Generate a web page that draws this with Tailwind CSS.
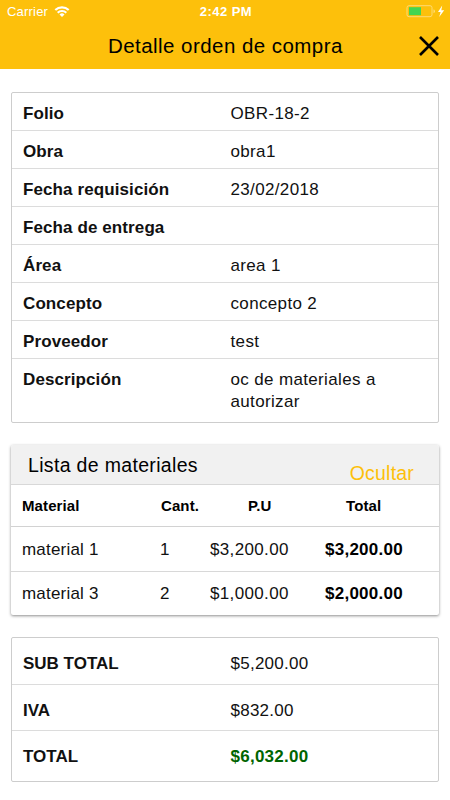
<!DOCTYPE html>
<html lang="es">
<head>
    <meta charset="UTF-8">
    <meta name="viewport" content="width=device-width, initial-scale=1.0">
    <title>Detalle orden de compra</title>
    <script src="https://cdn.jsdelivr.net/npm/@tailwindcss/browser@4"></script>
</head>
<body class="bg-white text-[#111] font-['Liberation_Sans',Arial,sans-serif] h-[800px] overflow-hidden whitespace-nowrap">

    <!-- Encabezado -->
    <header class="h-[69px] bg-[#fdc00b]">
        <!-- Barra de estado -->
        <div class="grid grid-cols-[1fr_auto_1fr] items-center h-[23px] pl-[7px] pr-[5px] text-white text-[13px]">
            <div class="flex items-center gap-[6px]">
                <span class="tracking-[0.2px]">Carrier</span>
                <svg class="w-[16px] h-[11px]" viewBox="0 0 15 11" fill="none" stroke="white" stroke-width="2.1">
                    <path d="M.8 4.1a9.5 9.5 0 0 1 13.4 0M3.2 6.7a6.1 6.1 0 0 1 8.6 0"/>
                    <path d="M7.5 11 5 8.5a3.5 3.5 0 0 1 5 0z" fill="white" stroke="none"/>
                </svg>
            </div>
            <span class="font-bold tracking-[0.45px]">2:42 PM</span>
            <div class="flex justify-end items-center">
                <svg class="w-[39px] h-[13px]" viewBox="0 0 39 13">
                    <rect x="1" y=".7" width="25" height="11" rx="2" fill="none" stroke="#fedb74"/>
                    <rect x="3" y="2.2" width="12" height="8" fill="#43d551"/>
                    <path d="M27.5 4.2q1.5.5 1.5 2t-1.5 2z" fill="#fedb74"/>
                    <path d="M36.2 .4 32 6.9h2.6L33.2 12l5-6.8h-2.9z" fill="white"/>
                </svg>
            </div>
        </div>
        <!-- Título -->
        <div class="grid grid-cols-[108px_1fr_auto] items-center h-[46px] pr-[11px] text-black">
            <span></span>
            <h1 class="text-[20.5px] tracking-[0.45px]">Detalle orden de compra</h1>
            <svg class="w-5 h-5" viewBox="0 0 20 20" stroke="black" stroke-width="2.6">
                <path d="M1 1l18 18M19 1 1 19"/>
            </svg>
        </div>
    </header>

    <main class="flex flex-col pt-[23px]">
        <!-- Datos de la orden -->
        <dl class="mx-[11px] h-[331px] border border-[#cdcdcd] rounded-[2px] divide-y divide-[#dcdcdc] text-[17px] leading-[22px] tracking-[0.35px]">
            <div class="flex h-[38px] pt-[10px] pl-[11px]"><dt class="w-[207.5px] font-bold text-[17px] tracking-[0.1px]">Folio</dt><dd>OBR-18-2</dd></div>
            <div class="flex h-[38px] pt-[10px] pl-[11px]"><dt class="w-[207.5px] font-bold text-[17px] tracking-[0.1px]">Obra</dt><dd>obra1</dd></div>
            <div class="flex h-[38px] pt-[10px] pl-[11px]"><dt class="w-[207.5px] font-bold text-[17px] tracking-[0.1px]">Fecha requisición</dt><dd>23/02/2018</dd></div>
            <div class="flex h-[38px] pt-[10px] pl-[11px]"><dt class="w-[207.5px] font-bold text-[17px] tracking-[0.1px]">Fecha de entrega</dt><dd></dd></div>
            <div class="flex h-[38px] pt-[10px] pl-[11px]"><dt class="w-[207.5px] font-bold text-[17px] tracking-[0.1px]">Área</dt><dd>area 1</dd></div>
            <div class="flex h-[38px] pt-[10px] pl-[11px]"><dt class="w-[207.5px] font-bold text-[17px] tracking-[0.1px]">Concepto</dt><dd>concepto 2</dd></div>
            <div class="flex h-[38px] pt-[10px] pl-[11px]"><dt class="w-[207.5px] font-bold text-[17px] tracking-[0.1px]">Proveedor</dt><dd>test</dd></div>
            <div class="flex h-[63px] pt-[10px] pl-[11px]"><dt class="w-[207.5px] font-bold text-[17px] tracking-[0.1px]">Descripción</dt><dd>oc de materiales a<br>autorizar</dd></div>
        </dl>

        <!-- Lista de materiales -->
        <section class="mx-[11px] mt-[22px] h-[170px] bg-white rounded-[2px] shadow-[0_1px_3px_rgba(0,0,0,0.45)]">
            <div class="flex justify-between h-[40px] pl-[17px] pr-[25px] bg-[#f1f1f1] border-b border-[#d8d8d8] rounded-t-[2px]">
                <h2 class="text-[19.5px] leading-[22px] pt-[9px] tracking-[0.33px] text-black">Lista de materiales</h2>
                <span class="text-[19.5px] leading-[22px] pt-[17px] tracking-[0.2px] text-[#fdc00b]">Ocultar</span>
            </div>
            <div class="grid grid-cols-[138px_50px_115px_125px] items-center h-[42px] pt-px pl-[11px] border-b border-[#d2d2d2] text-[15px] tracking-[0.1px] font-bold text-black">
                <span>Material</span><span class="pl-px">Cant.</span><span class="pl-[38px]">P.U</span><span class="pl-[21px]">Total</span>
            </div>
            <div class="grid grid-cols-[138px_50px_115px_125px] items-center h-[45px] pt-[2px] pl-[11px] border-b border-[#d8d8d8] text-[17px] tracking-[0.35px]">
                <span class="tracking-[0.2px]">material 1</span><span>1</span><span>$3,200.00</span><b class="text-black tracking-[0.25px]">$3,200.00</b>
            </div>
            <div class="grid grid-cols-[138px_50px_115px_125px] items-center h-[43px] pt-px pl-[11px] text-[17px] tracking-[0.35px]">
                <span class="tracking-[0.2px]">material 3</span><span>2</span><span>$1,000.00</span><b class="text-black tracking-[0.25px]">$2,000.00</b>
            </div>
        </section>

        <!-- Totales -->
        <dl class="mx-[11px] mt-[22px] h-[145px] border border-[#cdcdcd] rounded-[2px] divide-y divide-[#dcdcdc] text-[17px] leading-[22px] tracking-[0.25px]">
            <div class="flex h-[47px] pt-[15px] pl-[11px]"><dt class="w-[207.5px] font-bold tracking-normal">SUB TOTAL</dt><dd>$5,200.00</dd></div>
            <div class="flex h-[46px] pt-[15px] pl-[11px]"><dt class="w-[207.5px] font-bold tracking-normal">IVA</dt><dd>$832.00</dd></div>
            <div class="flex h-[50px] pt-[15px] pl-[11px]"><dt class="w-[207.5px] font-bold tracking-normal">TOTAL</dt><dd class="font-bold text-[#006400]">$6,032.00</dd></div>
        </dl>
    </main>
</body>
</html>
